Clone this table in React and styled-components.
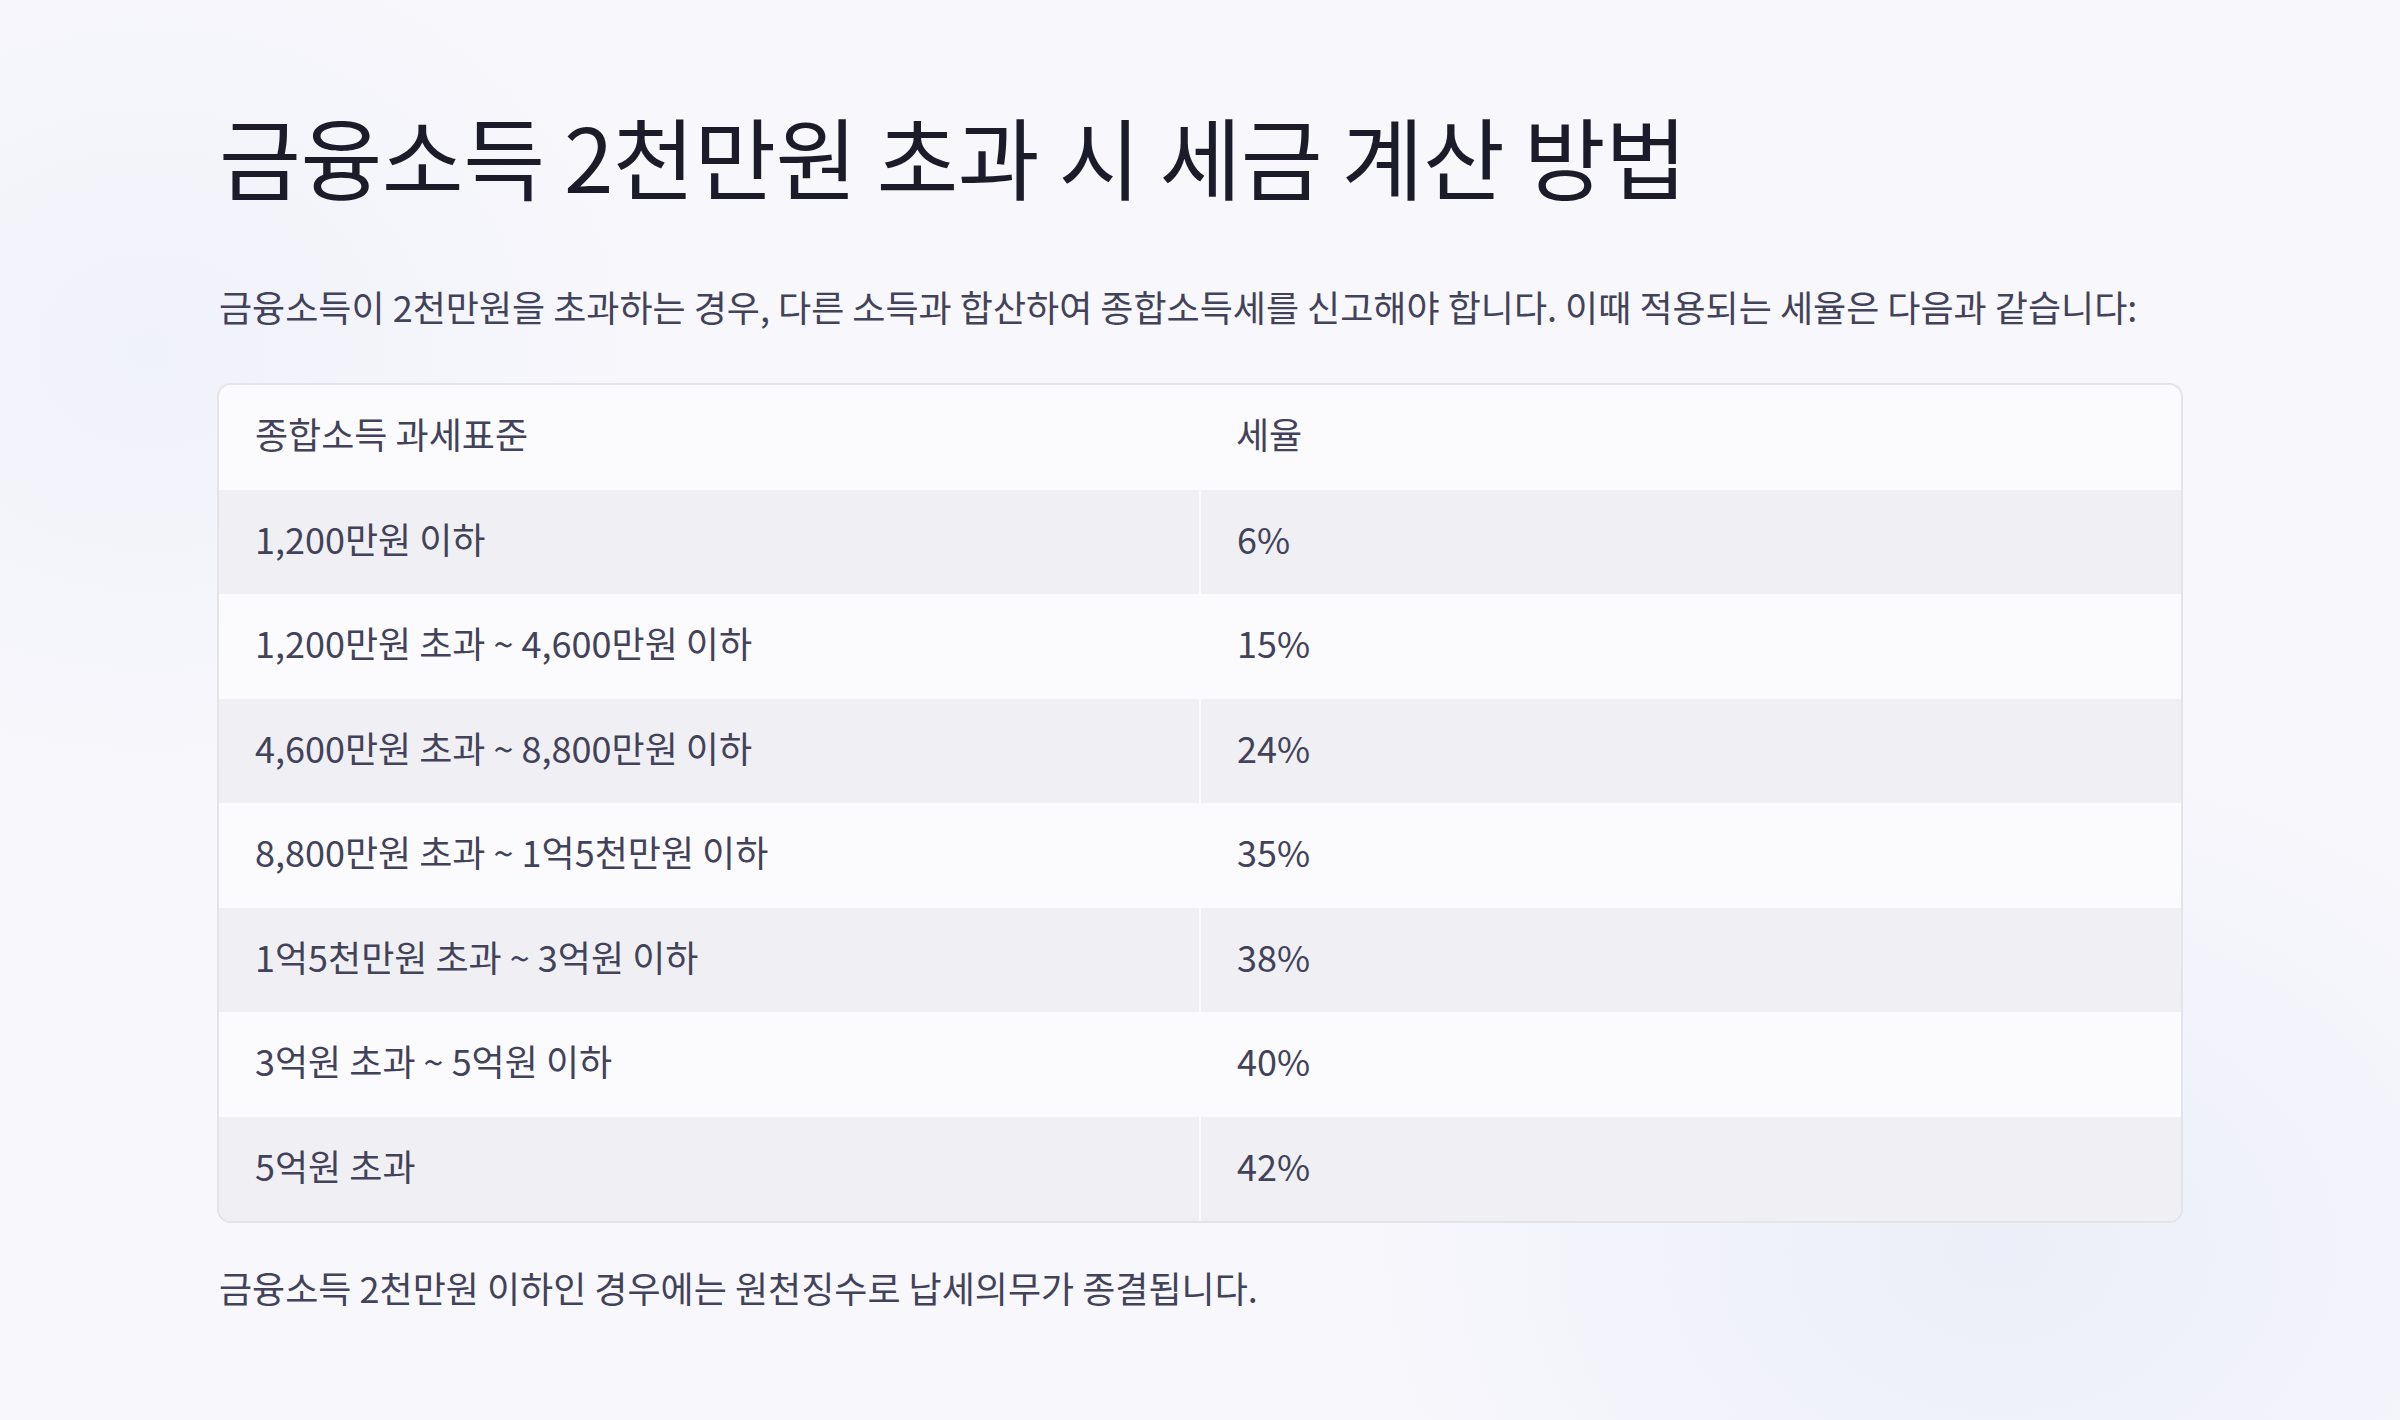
import React from 'react';
import styled, { createGlobalStyle } from 'styled-components';

const GlobalStyle = createGlobalStyle`
  html, body {
    margin: 0;
    padding: 0;
  }
  body {
    background-color: #f7f7fc;
    background-image:
      radial-gradient(ellipse 900px 700px at 2000px 1250px, rgba(228, 233, 246, 0.6), transparent 70%),
      radial-gradient(ellipse 700px 600px at 150px 350px, rgba(236, 239, 248, 0.6), transparent 70%);
    min-height: 1420px;
    font-family: "Noto Sans CJK KR", "Noto Sans", sans-serif;
  }
`;

const Page = styled.main`
  padding: 101px 217px 80px 217px;
  box-sizing: border-box;
  width: 2400px;
`;

const Title = styled.h1`
  margin: 0;
  font-family: "Noto Sans CJK KR", sans-serif;
  font-weight: 400;
  font-size: 89px;
  line-height: 107px;
  letter-spacing: -0.5px;
  color: #1b1b29;
  padding-left: 2px;
`;

const Text = styled.p`
  margin: ${(p) => p.$top || 0}px 0 0 0;
  font-size: 36px;
  line-height: 54px;
  color: #42425a;
  padding-left: 2px;
`;

const Card = styled.div`
  margin-top: 50px;
  border: 2px solid #e3e3ea;
  border-radius: 14px;
  overflow: hidden;
  background: #fafafe;
`;

const Table = styled.table`
  width: 100%;
  border-collapse: collapse;
  table-layout: fixed;
`;

const Row = styled.tr`
  height: 104.5px;
  background: ${(p) => (p.$striped ? '#f0f0f4' : 'rgba(250, 250, 254, 0.85)')};
`;

const Cell = styled.td`
  padding: 0 36px 8px 36px;
  font-size: 36px;
  line-height: 54px;
  color: #42425a;
  font-weight: 400;
  text-align: left;
  vertical-align: middle;
  border-left: ${(p) => (p.$divider ? '2px solid #fbfbfe' : 'none')};
`;

const HeadCell = styled(Cell).attrs({ as: 'th' })`
  font-weight: 400;
`;

const rates = [
  ['1,200만원 이하', '6%'],
  ['1,200만원 초과 ~ 4,600만원 이하', '15%'],
  ['4,600만원 초과 ~ 8,800만원 이하', '24%'],
  ['8,800만원 초과 ~ 1억5천만원 이하', '35%'],
  ['1억5천만원 초과 ~ 3억원 이하', '38%'],
  ['3억원 초과 ~ 5억원 이하', '40%'],
  ['5억원 초과', '42%'],
];

const App = () => {
  return (
    <>
      <GlobalStyle />
      <Page>
        <Title>금융소득 2천만원 초과 시 세금 계산 방법</Title>
        <Text $top={71}>
          금융소득이 2천만원을 초과하는 경우, 다른 소득과 합산하여 종합소득세를 신고해야 합니다. 이때 적용되는 세율은 다음과 같습니다:
        </Text>
        <Card>
          <Table>
            <thead>
              <Row>
                <HeadCell>종합소득 과세표준</HeadCell>
                <HeadCell>세율</HeadCell>
              </Row>
            </thead>
            <tbody>
              {rates.map(([range, rate], i) => (
                <Row key={range} $striped={i % 2 === 0}>
                  <Cell>{range}</Cell>
                  <Cell $divider>{rate}</Cell>
                </Row>
              ))}
            </tbody>
          </Table>
        </Card>
        <Text $top={37}>금융소득 2천만원 이하인 경우에는 원천징수로 납세의무가 종결됩니다.</Text>
      </Page>
    </>
  );
};

export default App;
